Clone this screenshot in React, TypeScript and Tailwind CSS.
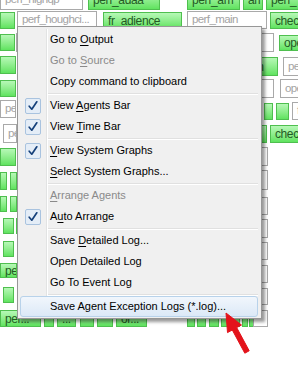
import React from "react";

type Box = { x: number; y: number; w: number; h: number; g: boolean; t?: string };

const boxes: Box[] = [
  { x: 0, y: -10, w: 83, h: 20, g: false, t: "perf_highqp" },
  { x: 88, y: -10, w: 72, h: 20, g: true, t: "perf_adaa" },
  { x: 187, y: -10, w: 53, h: 20, g: true, t: "perf_am" },
  { x: 243, y: -10, w: 20, h: 20, g: true, t: "am" },
  { x: 266, y: -10, w: 40, h: 20, g: true, t: "perf_" },

  { x: 0, y: 12, w: 15, h: 17, g: true },
  { x: 17, y: 11, w: 80, h: 18, g: false, t: "perf_houghci..." },
  { x: 103, y: 12, w: 79, h: 17, g: true, t: "fr_adience" },
  { x: 187, y: 11, w: 80, h: 18, g: false, t: "perf_main" },
  { x: 270, y: 12, w: 40, h: 17, g: true, t: "chec" },

  { x: 0, y: 34, w: 15, h: 17, g: true },
  { x: 16, y: 33, w: 40, h: 19, g: false },
  { x: 200, y: 33, w: 74, h: 19, g: false },
  { x: 279, y: 35, w: 30, h: 16, g: true, t: "ope" },

  { x: 0, y: 56, w: 16, h: 18, g: true },
  { x: 218, y: 57, w: 60, h: 19, g: true, t: "perf_cm" },
  { x: 283, y: 57, w: 30, h: 19, g: false, t: "pe" },

  { x: 0, y: 80, w: 16, h: 17, g: true },
  { x: 212, y: 79, w: 62, h: 19, g: false, t: "perf_am" },
  { x: 280, y: 79, w: 30, h: 19, g: false, t: "ope" },

  { x: 0, y: 100, w: 16, h: 18, g: false, t: "pe" },
  { x: 264, y: 103, w: 9, h: 17, g: true },
  { x: 276, y: 103, w: 13, h: 17, g: true },
  { x: 292, y: 102, w: 20, h: 18, g: false, t: "f" },

  { x: 3, y: 124, w: 14, h: 19, g: false, t: "pe" },
  { x: 250, y: 125, w: 17, h: 18, g: true },
  { x: 270, y: 125, w: 40, h: 18, g: true, t: "chec" },

  { x: 0, y: 148, w: 16, h: 18, g: true },
  { x: 240, y: 147, w: 28, h: 19, g: false },

  { x: 0, y: 172, w: 7, h: 18, g: true },
  { x: 10, y: 172, w: 7, h: 18, g: true },
  { x: 240, y: 170, w: 28, h: 20, g: false },

  { x: 0, y: 196, w: 7, h: 16, g: true },
  { x: 10, y: 196, w: 7, h: 16, g: true },
  { x: 240, y: 197, w: 28, h: 18, g: false },

  { x: 3, y: 218, w: 11, h: 16, g: true },
  { x: 16, y: 218, w: 10, h: 16, g: true },
  { x: 240, y: 219, w: 28, h: 19, g: false },

  { x: 3, y: 241, w: 11, h: 16, g: true },
  { x: 240, y: 242, w: 28, h: 18, g: false },

  { x: 0, y: 263, w: 17, h: 15, g: true, t: "pe" },
  { x: 240, y: 265, w: 28, h: 18, g: false },

  { x: 3, y: 287, w: 11, h: 16, g: true },
  { x: 240, y: 288, w: 28, h: 17, g: false },

  { x: 0, y: 310, w: 41, h: 17, g: true, t: "per..." },
  { x: 44, y: 310, w: 10, h: 17, g: true },
  { x: 57, y: 310, w: 19, h: 17, g: true, t: "..." },
  { x: 80, y: 310, w: 14, h: 17, g: true },
  { x: 97, y: 310, w: 16, h: 17, g: true },
  { x: 116, y: 310, w: 31, h: 17, g: true, t: "or..." },
  { x: 187, y: 310, w: 8, h: 17, g: true },
  { x: 197, y: 310, w: 9, h: 17, g: true },
  { x: 209, y: 310, w: 10, h: 17, g: true },
  { x: 221, y: 310, w: 10, h: 17, g: true },
  { x: 233, y: 310, w: 7, h: 17, g: true },
  { x: 242, y: 310, w: 5, h: 17, g: true },
  { x: 249, y: 310, w: 3, h: 17, g: true },
  { x: 253, y: 310, w: 15, h: 17, g: false },
];

type Item =
  | { sep: true }
  | { sep?: false; label: React.ReactNode; disabled?: boolean; checked?: boolean; hot?: boolean };

const U = ({ c }: { c: string }) => <span className="underline underline-offset-[2px]">{c}</span>;

const items: Item[] = [
  { label: <>Go to <U c="O" />utput</> },
  { label: <>Go to <U c="S" />ource</>, disabled: true },
  { label: <>Copy command to clipboard</> },
  { sep: true },
  { label: <>View <U c="A" />gents Bar</>, checked: true },
  { label: <>View <U c="T" />ime Bar</>, checked: true },
  { sep: true },
  { label: <><U c="V" />iew System Graphs</>, checked: true },
  { label: <><U c="S" />elect System Graphs...</> },
  { sep: true },
  { label: <><U c="A" />rrange Agents</>, disabled: true },
  { label: <>A<U c="u" />to Arrange</>, checked: true },
  { sep: true },
  { label: <>Save <U c="D" />etailed Log...</> },
  { label: <>Open Detailed Log</> },
  { label: <>Go To Event Log</> },
  { sep: true },
  { label: <>Save Agent Exception Logs (*.log)...</>, hot: true },
];

function Check() {
  return (
    <div className="w-[16px] h-[16px] rounded-[2px] border border-[#a9c3df] bg-[#e4edf7] flex items-center justify-center">
      <svg width="12" height="12" viewBox="0 0 12 12">
        <path d="M2.2 6.2 L4.8 9.2 L9.8 1.8" fill="none" stroke="#15407a" strokeWidth="1.7" strokeLinecap="round" strokeLinejoin="round" />
      </svg>
    </div>
  );
}

export default function App() {
  return (
    <div className="relative w-[298px] h-[378px] overflow-hidden bg-white" style={{ fontFamily: '"Liberation Sans", Arial, sans-serif' }}>
      {boxes.map((b, i) => (
        <div
          key={i}
          className={
            b.g
              ? "absolute flex items-center overflow-hidden whitespace-nowrap border border-[#4fbf4f] bg-linear-to-b from-[#b6f8b6] to-[#5fe35f] text-[#245a24] text-[12px] tracking-[-0.4px] pl-[4px] leading-none"
              : "absolute flex items-center overflow-hidden whitespace-nowrap border border-[#a9a9a9] bg-white text-[#a3a3a3] text-[11.5px] tracking-[-0.6px] pl-[4px] leading-none"
          }
          style={{ left: b.x, top: b.y, width: b.w, height: b.h }}
        >
          {b.t}
        </div>
      ))}

      {/* context menu */}
      <div
        className="absolute left-[17px] top-[26px] w-[245px] border border-[#979797] bg-[#f0f0f0] px-[2px] pt-[2px] pb-[1px] shadow-[3px_3px_3px_rgba(0,0,0,0.4)] text-[11px] text-black"
        style={{ fontFamily: '"Liberation Sans", Arial, sans-serif' }}
      >
        <div className="absolute left-[28px] top-[2px] bottom-[2px] w-[2px] flex">
          <div className="w-px bg-[#e2e3e3]" />
          <div className="w-px bg-white" />
        </div>
        <div className="flex flex-col">
          {items.map((it, i) =>
            it.sep ? (
              <div key={i} className="h-[3px] pl-[27px] pr-[1px] flex flex-col pt-px">
                <div className="h-px bg-[#e0e0e0]" />
                <div className="h-px bg-white" />
              </div>
            ) : (
              <div
                key={i}
                className={
                  it.hot
                    ? "relative h-[21px] flex items-center rounded-[3px] border border-[#b8d2ea] bg-linear-to-b from-[#f1f6fc] to-[#dce9f7] mr-[1px]"
                    : "relative h-[21px] flex items-center border border-transparent"
                }
              >
                <div className="w-[28px] h-full flex items-center pl-[4px] shrink-0">{it.checked ? <Check /> : null}</div>
                <div className={it.disabled ? "pl-[1px] text-[#8a8a8a] whitespace-nowrap" : "pl-[1px] whitespace-nowrap"}>{it.label}</div>
              </div>
            )
          )}
        </div>
      </div>

      {/* red arrow */}
      <svg className="absolute left-0 top-0" width="298" height="378" viewBox="0 0 298 378">
        <polygon
          points="226,313 241.5,325 236.7,327.6 249.2,350.8 244.8,353.2 232.3,330 227.5,332.6"
          fill="#e3131b"
          stroke="#e3131b"
          strokeWidth="1"
          strokeLinejoin="round"
        />
      </svg>
    </div>
  );
}
